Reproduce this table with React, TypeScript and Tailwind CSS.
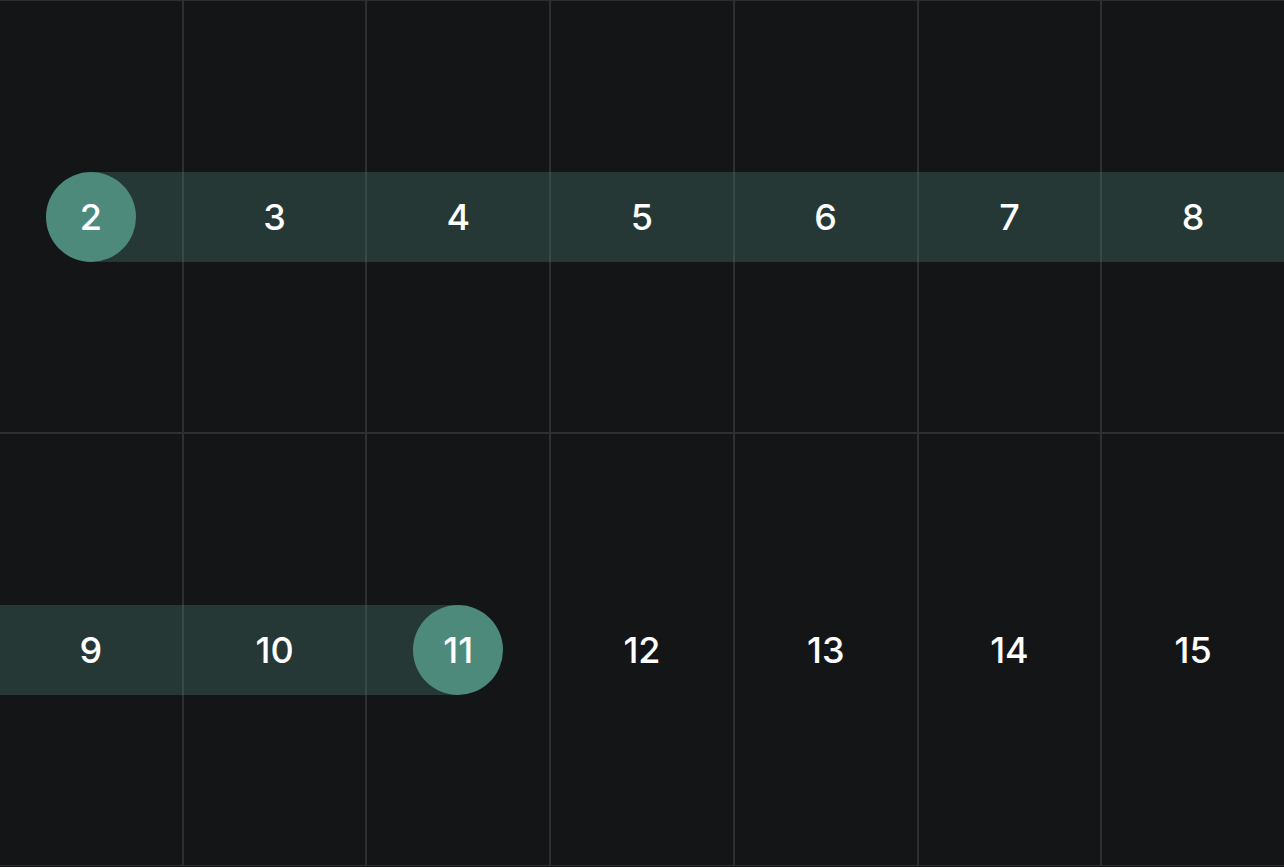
import React from "react";

const weeks = [
  [2, 3, 4, 5, 6, 7, 8],
  [9, 10, 11, 12, 13, 14, 15],
];

const rangeStart = 2;
const rangeEnd = 11;

function DayCell({ day }: { day: number }) {
  const inRange = day >= rangeStart && day <= rangeEnd;
  const isEdge = day === rangeStart || day === rangeEnd;

  let band = "";
  if (inRange) {
    if (day === rangeStart) band = "left-1/2 -right-px";
    else if (day === rangeEnd) band = "-left-px right-1/2";
    else band = "-left-px -right-px";
  }

  return (
    <div className="relative flex items-center justify-center border border-[#2e2f31]">
      {inRange && (
        <div
          className={`absolute top-1/2 h-[90px] -translate-y-1/2 bg-[#4e8a7c]/30 ${band}`}
        />
      )}
      <div
        className={`relative flex h-[90px] w-[90px] items-center justify-center rounded-full text-[36px] font-medium text-white ${
          isEdge ? "bg-[#4e8a7c]" : ""
        }`}
      >
        {day}
      </div>
    </div>
  );
}

export default function App() {
  return (
    <div
      className="h-[867px] w-full overflow-hidden bg-[#141517]"
      style={{ fontFamily: "Inter, 'Noto Sans', sans-serif" }}
    >
      <div className="-ml-px grid h-[866px] w-[calc(100%+2px)] grid-cols-7 grid-rows-2">
        {weeks.flat().map((d) => (
          <DayCell key={d} day={d} />
        ))}
      </div>
    </div>
  );
}
